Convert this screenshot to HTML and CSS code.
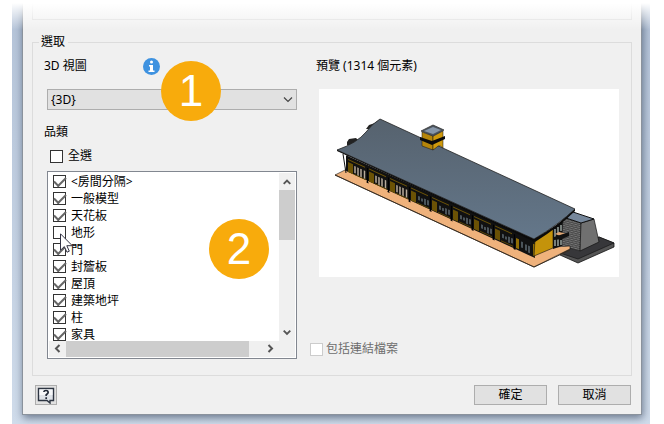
FILE: index.html
```
<!DOCTYPE html>
<html lang="zh-Hant">
<head>
    <meta charset="UTF-8">
    <meta name="viewport" content="width=device-width, initial-scale=1.0">
    <title>選取</title>
    <link rel="stylesheet" href="styles.css">
</head>
<body>
    <div class="desktop">
        <form class="dialog">
            <div class="panel-end"></div>
            <fieldset class="group">
                <legend>選取</legend>
                <div class="columns">
                    <div class="left">
                        <div class="label-row">
                            <label for="view">3D 視圖</label>
                            <svg class="info" viewBox="0 0 17 17" width="17" height="17">
                                <circle cx="8.5" cy="8.5" r="8.5" fill="#3e92e0"/>
                                <circle cx="8.5" cy="4" r="1.5" fill="#fff"/>
                                <path d="M6 7h4v5.500h1.500V14h-6v-1.500H7V8.500H6z" fill="#fff"/>
                            </svg>
                        </div>
                        <div class="select-box">
                            <select id="view">
                                <option>{3D}</option>
                            </select>
                            <svg class="arrow" viewBox="0 0 10 6" width="10" height="6"><path d="M1 .5l4 4 4-4" fill="none" stroke="#444" stroke-width="1.200"/></svg>
                            <span class="badge badge-one">1</span>
                        </div>
                        <div class="title">品類</div>
                        <label class="check all"><input type="checkbox">全選</label>
                        <div class="list-box">
                            <div class="list">
                                <label class="check"><input type="checkbox" checked>&lt;房間分隔&gt;</label>
                                <label class="check"><input type="checkbox" checked>一般模型</label>
                                <label class="check"><input type="checkbox" checked>天花板</label>
                                <label class="check"><input type="checkbox">地形</label>
                                <label class="check"><input type="checkbox" checked>門</label>
                                <label class="check"><input type="checkbox" checked>封簷板</label>
                                <label class="check"><input type="checkbox" checked>屋頂</label>
                                <label class="check"><input type="checkbox" checked>建築地坪</label>
                                <label class="check"><input type="checkbox" checked>柱</label>
                                <label class="check"><input type="checkbox" checked>家具</label>
                            </div>
                            <div class="scroll-y">
                                <svg viewBox="0 0 17 17" width="16" height="17"><path d="M5 11l3.500-3.500L12 11" fill="none" stroke="#555" stroke-width="2"/></svg>
                                <div class="thumb"></div>
                                <svg viewBox="0 0 17 17" width="16" height="17"><path d="M5 6.500L8.500 10 12 6.500" fill="none" stroke="#555" stroke-width="2"/></svg>
                            </div>
                            <div class="scroll-x">
                                <svg viewBox="0 0 17 15" width="17" height="15"><path d="M10.500 4L7 7.500l3.500 3.500" fill="none" stroke="#555" stroke-width="2"/></svg>
                                <div class="thumb"></div>
                                <svg viewBox="0 0 17 15" width="17" height="15"><path d="M6.500 4L10 7.500 6.500 11" fill="none" stroke="#555" stroke-width="2"/></svg>
                            </div>
                            <svg class="cursor" viewBox="0 0 13 20" width="13" height="20">
                                <path d="M.5.800v16.400l3.800-3.600 2.700 5.600 2.300-1-2.500-5.500h5.500z" fill="#fff" stroke="#334"/>
                            </svg>
                            <span class="badge badge-two">2</span>
                        </div>
                    </div>
                    <div class="right">
                        <div class="preview-label">預覽 (1314 個元素)</div>
                        <div class="preview">
                            <svg viewBox="0 0 300 188">
                                <defs>
                                    <linearGradient id="roof" x1="0" y1="0" x2="0" y2="1">
                                        <stop offset="0" stop-color="#56626e"/>
                                        <stop offset="1" stop-color="#64778a"/>
                                    </linearGradient>
                                    <pattern id="brick" width="4" height="4" patternUnits="userSpaceOnUse" patternTransform="skewY(14)">
                                        <rect width="4" height="4" fill="#777"/>
                                        <path d="M0 .5h4M0 2.500h4M1 .5v2M3 2.500v2" stroke="#3d3d3d" stroke-width=".7"/>
                                    </pattern>
                                    <g id="bay">
                                        <path d="M0 57.500h17" stroke="#6e5508"/>
                                        <path d="M0 60h5v10H0z" fill="#6b5205"/>
                                        <path d="M6 69.500h12" stroke="#5c4706"/>
                                        <path d="M19.500 57v15M18.500 71.500h2" stroke="#000" stroke-width="1.200"/>
                                    </g>
                                    <g id="light">
                                        <use href="#bay"/>
                                        <path d="M7 61v7M10 61v8M13 61v8M16.500 61v8" stroke="#b8ab9b" stroke-width="1.500"/>
                                    </g>
                                    <g id="dark">
                                        <use href="#bay"/>
                                        <path d="M8 62v4M11 63v3M14 62v6M17 62v5" stroke="#74838c" stroke-width="1.200"/>
                                    </g>
                                </defs>
                                <!-- annex and its base -->
                                <path d="M241 164l39-16 15 6v4l-36 16-18-8z" fill="#555" stroke="#111" stroke-width=".8"/>
                                <path d="M241 164l39-16 15 6-36 16z" fill="#37373a" stroke="#111" stroke-width=".6"/>
                                <path d="M244 128l18 6-1 28-18-5z" fill="url(#brick)" stroke="#222" stroke-width=".6"/>
                                <path d="M262 134l13-4 5 23-19 9z" fill="#707070" stroke="#111" stroke-width=".7"/>
                                <path d="M244 128l10-5 21 7-13 4z" fill="#76879b" stroke="#111"/>
                                <!-- terrace -->
                                <path d="M16 86l10-5 189 84 19-7 17-1v3l-36 18z" fill="#efb27c" stroke="#111" stroke-width=".6"/>
                                <path d="M16 86l199 92 36-17" fill="none" stroke="#3a2d20"/>
                                <!-- end of the roof structure behind -->
                                <path d="M28 53l2-3 7-1 3 3-6 5-6-1zM47 40l3-4 6-2-5 6z" fill="#222"/>
                                <!-- long facade -->
                                <g transform="matrix(1 .4518 0 1 0 0)">
                                    <path d="M27 54h189v17.500L120 70.500 27 69.500z" fill="#111"/>
                                    <use href="#light" x="29"/>
                                    <use href="#light" x="50"/>
                                    <use href="#light" x="71"/>
                                    <use href="#dark" x="92"/>
                                    <use href="#dark" x="113"/>
                                    <use href="#dark" x="134"/>
                                    <use href="#dark" x="155"/>
                                    <use href="#dark" x="176"/>
                                    <path d="M197 60h3v10h-3zM214 58h2v12h-2z" fill="#8f6d05"/>
                                    <path d="M203 61v6M207 62v6M210 62v7" stroke="#74838c" stroke-width="1.200"/>
                                </g>
                                <path d="M24 65l3 19M29 66l-2 15" fill="none" stroke="#111"/>
                                <!-- end wall and glazing -->
                                <path d="M216 150l18-11v20l-19 8z" fill="#c4930b" stroke="#111" stroke-width=".6"/>
                                <path d="M234 139l19-15-9 7-1 26-9 3z" fill="#111"/>
                                <path d="M236 140v17M239 138v6M239 150v7M242 136v6M242 151v5" stroke="#aebbb5" stroke-width="1.300"/>
                                <path d="M236 145l4-2 9 2-5 3z" fill="#dfa674"/>
                                <path d="M235 148l15-5v4l-7 3-8 1z" fill="#111"/>
                                <!-- roof -->
                                <path d="M61 30L256 120Q239 136 215 150L18 61Q38 54 47 43 53 35 61 30z" fill="url(#roof)" stroke="#222" stroke-width=".8"/>
                                <path d="M18 61l197 89Q239 137 256 120v2Q240 138 216 153L18 62z" fill="#0b0b0b"/>
                                <!-- tower -->
                                <path d="M103 43l11 4v14l-11-4z" fill="#b5850b" stroke="#111" stroke-width=".5"/>
                                <path d="M114 47l10-5v17q-4-4-6-1l-4 3z" fill="#d09a0c" stroke="#111" stroke-width=".5"/>
                                <path d="M102 42l12-6 11 5-11 6z" fill="#4c545e" stroke="#333" stroke-width=".8"/>
                                <path d="M105 42l9-4 8 3-8 4z" fill="#8797aa"/>
                                <path d="M101 48l12 4 13-5v3l-13 6-12-5z" fill="#0b0b0b"/>
                            </svg>
                        </div>
                        <label class="check linked"><input type="checkbox" disabled>包括連結檔案</label>
                    </div>
                </div>
            </fieldset>
            <div class="footer">
                <button type="button" class="help" aria-label="說明">
                    <svg viewBox="0 0 18 17" width="18" height="17">
                        <path d="M1.500 1.500h15v12H13V16l-3-2.500H1.500z" fill="#dfe3e9" stroke="#2d3542" stroke-width="1.400"/>
                        <path d="M2.500 2.500h13V8h-13z" fill="#f6f7f9"/>
                        <path d="M6.800 5Q7 3.500 9 3.500t2.200 1.700Q11.200 6.500 9.200 7.700V9M9.200 10.300v1.700" fill="none" stroke="#222a38" stroke-width="1.700"/>
                    </svg>
                </button>
                <button type="button">確定</button>
                <button type="button">取消</button>
            </div>
        </form>
        <div class="fade"></div>
    </div>
</body>
</html>
```
FILE: styles.css
```
body {
    margin: 0;
    background-color: #fff;
    color: #000;
    font-family: "Noto Sans", "Noto Sans CJK TC", sans-serif;
    font-size: 12px;
    line-height: 16px;
}

* {
    box-sizing: border-box;
}

.desktop {
    position: relative;
    min-height: 100vh;
    margin: 0 14px 0 12px;
    padding: 0 8px 10px 10px;
    overflow: hidden;
    background: linear-gradient(#b4c3d8, #d0dceb);
}

.fade {
    position: absolute;
    top: 0;
    left: 0;
    right: 0;
    height: 30px;
    background: linear-gradient(#fff 10%, rgba(255, 255, 255, 0));
    pointer-events: none;
}

.dialog {
    padding: 0 9px 9px;
    background-color: #f0f0f0;
    border: 1px solid #8a929c;
    border-top: 0;
    box-shadow: 1px 3px 8px rgba(40, 55, 80, 0.6);
}

.panel-end {
    height: 20px;
    border: 1px solid #dcdcdc;
    border-top: 0;
}

.group {
    margin: 14px 0 0;
    padding: 8px 12px 16px 11px;
    border: 1px solid #dcdcdc;
    min-width: 0;
}

legend {
    margin-left: -5px;
    padding: 0 3px 0 2px;
}

.columns {
    display: grid;
    grid-template-columns: 253fr 309fr;
    gap: 13px;
}

.left,
.right {
    display: flex;
    flex-direction: column;
    min-width: 0;
}

.label-row {
    display: flex;
    align-items: center;
    height: 16px;
    margin-bottom: 15px;
}

.label-row label {
    width: 99px;
}

.select-box {
    position: relative;
    margin: 0 0 14px 3px;
}

select {
    display: block;
    width: 100%;
    height: 21px;
    padding: 0 3px;
    appearance: none;
    background-color: #e1e1e1;
    border: 1px solid #adadad;
    border-radius: 0;
    color: #000;
    font: inherit;
}

.arrow {
    position: absolute;
    top: 8px;
    right: 4px;
    pointer-events: none;
}

.badge {
    position: absolute;
    width: 60px;
    height: 60px;
    border-radius: 50%;
    background-color: #f8ab0c;
    color: #fff;
    font-family: "Liberation Sans", Arial, sans-serif;
    font-size: 44px;
    line-height: 60px;
    text-align: center;
}

.badge-one {
    top: -28px;
    left: 114px;
}

.badge-two {
    top: 47px;
    left: 161px;
}

.check {
    display: flex;
    align-items: center;
    gap: 5px;
    white-space: nowrap;
}

input[type="checkbox"] {
    display: grid;
    place-content: center;
    flex: none;
    width: 13px;
    height: 13px;
    margin: 0;
    appearance: none;
    background-color: #fff;
    border: 1px solid #333;
}

input[type="checkbox"]:checked::after {
    content: "";
    width: 10px;
    height: 5px;
    margin-bottom: 3px;
    border: solid #666;
    border-width: 0 0 2px 2px;
    transform: rotate(-45deg);
}

input[type="checkbox"]:disabled {
    border-color: #ccc;
}

.all {
    margin: 8px 0 7px 6px;
}

.list-box {
    position: relative;
    display: grid;
    grid-template-columns: 1fr 16px;
    grid-template-rows: 168px 16px;
    margin-left: 3px;
    padding: 1px;
    border: 1px solid #828790;
    background-color: #fff;
}

.list {
    overflow: hidden;
    padding-left: 4px;
}

.list .check {
    height: 17px;
}

.scroll-y,
.scroll-x {
    display: flex;
    background-color: #f0f0f0;
}

.scroll-y {
    flex-direction: column;
}

.scroll-x {
    grid-column: span 2;
    padding-right: 16px;
}

.scroll-y svg,
.scroll-x svg {
    flex: none;
}

.thumb {
    background-color: #cdcdcd;
}

.scroll-y .thumb {
    height: 50px;
    margin-bottom: auto;
}

.scroll-x .thumb {
    flex: 1;
    margin-right: 13px;
}

.cursor {
    position: absolute;
    top: 61px;
    left: 12px;
}

.preview-label {
    margin: 0 0 15px 6px;
}

.preview {
    margin-left: 9px;
    background-color: #fff;
}

.preview svg {
    display: block;
    width: 100%;
}

.linked {
    gap: 3px;
    margin: auto 0 2px;
    color: #6d6d6d;
}

.footer {
    display: flex;
    gap: 11px;
    padding: 9px 1px 0 0;
}

button {
    width: 73px;
    height: 20px;
    padding: 0;
    background-color: #e1e1e1;
    border: 1px solid #adadad;
    color: #000;
    font: inherit;
}

.help {
    display: grid;
    place-content: center;
    width: 22px;
    margin: 0 auto 0 3px;
}
```
